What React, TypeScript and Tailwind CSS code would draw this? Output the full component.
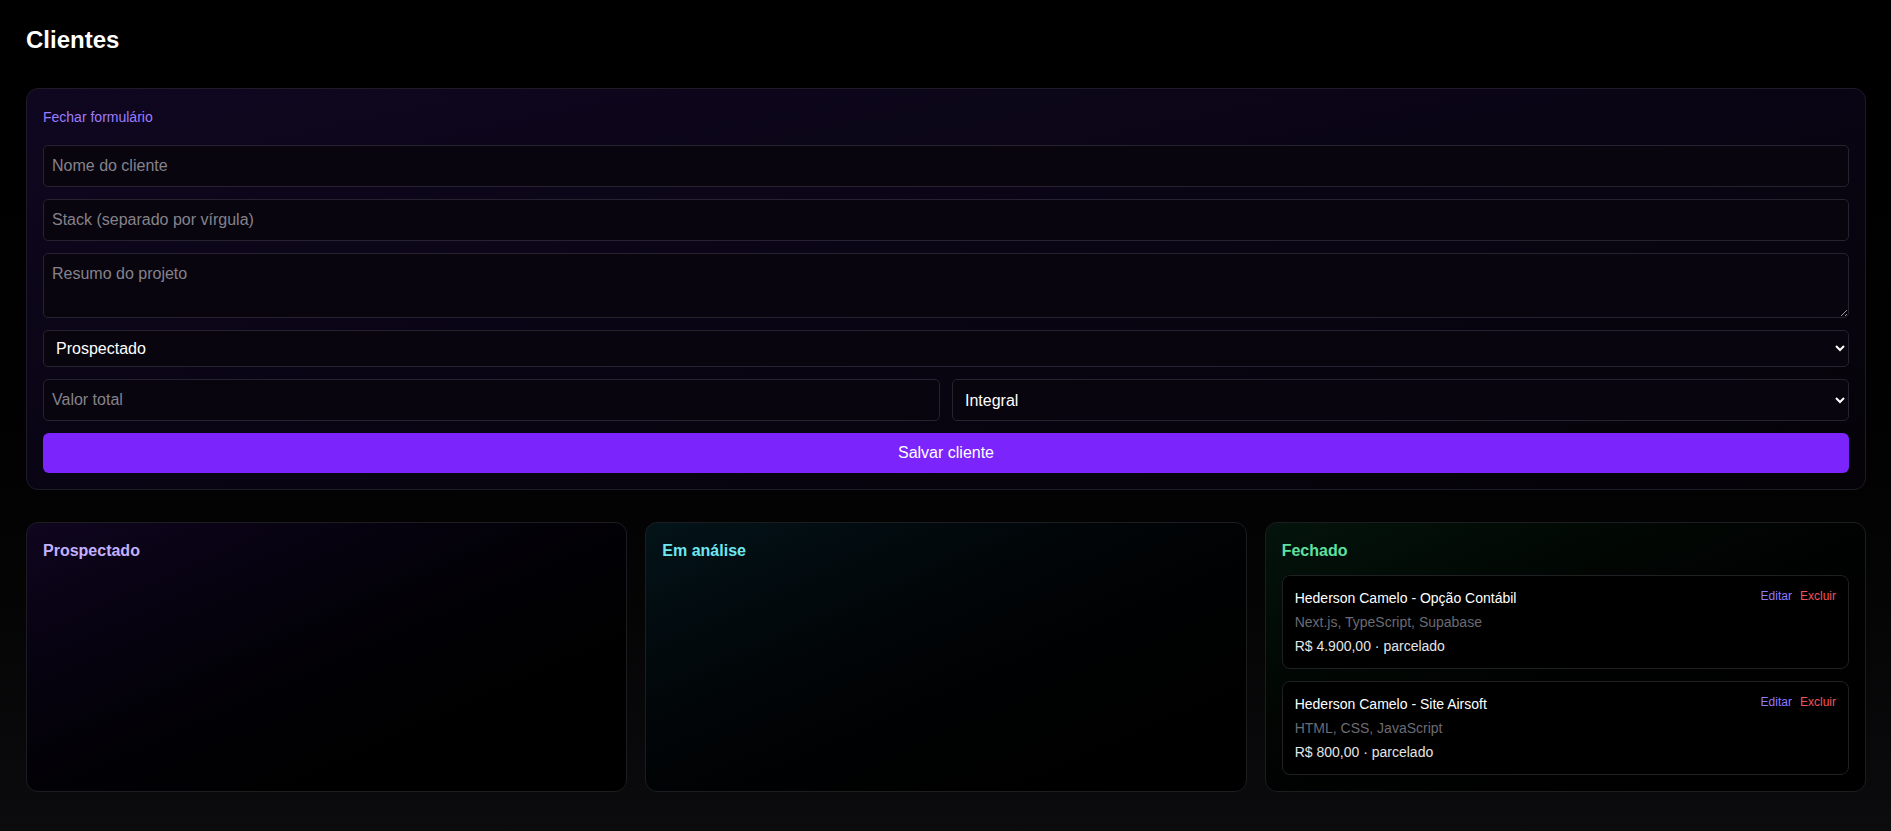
import { useState } from "react";

type Cliente = {
  id: number;
  nome: string;
  stack: string;
  valor: string;
  pagamento: string;
};

const fechados: Cliente[] = [
  { id: 1, nome: "Hederson Camelo - Opção Contábil", stack: "Next.js, TypeScript, Supabase", valor: "R$ 4.900,00", pagamento: "parcelado" },
  { id: 2, nome: "Hederson Camelo - Site Airsoft", stack: "HTML, CSS, JavaScript", valor: "R$ 800,00", pagamento: "parcelado" },
];

const field =
  "w-full rounded-[5px] border border-[#26222f] bg-[#08050e] px-2 text-base text-white placeholder:text-[#85828c] outline-none";

function ClienteCard({ c }: { c: Cliente }) {
  return (
    <div className="rounded-lg border border-[#1f1f24] bg-black p-3">
      <div className="flex items-start justify-between">
        <div className="text-sm text-white">{c.nome}</div>
        <div className="flex gap-2 text-xs">
          <button className="text-[#8f7bff]">Editar</button>
          <button className="text-[#f0545a]">Excluir</button>
        </div>
      </div>
      <div className="mt-1 text-sm text-[#6b6b73]">{c.stack}</div>
      <div className="mt-1 text-sm text-[#e5e5e5]">
        {c.valor} · {c.pagamento}
      </div>
    </div>
  );
}

function Coluna({ title, color, tint, items }: { title: string; color: string; tint: string; items: Cliente[] }) {
  return (
    <div className={`rounded-xl border border-[#1c1c21] bg-gradient-to-br ${tint} to-black p-4`}>
      <h2 className={`text-base font-bold ${color}`}>{title}</h2>
      <div className="mt-3 space-y-3">
        {items.map((c) => (
          <ClienteCard key={c.id} c={c} />
        ))}
      </div>
    </div>
  );
}

export default function App() {
  const [open] = useState(true);

  return (
    <div
      className="min-h-screen bg-gradient-to-b from-black to-[#0c0c0e] pl-[26px] pr-[25px] pt-6 pb-10 text-white"
      style={{ fontFamily: '"Liberation Sans", Arial, sans-serif' }}
    >
      <h1 className="text-2xl font-bold">Clientes</h1>

      {open ? (
        <div className="mt-8 rounded-xl border border-[#1e1a28] bg-gradient-to-br from-[#0f0720] to-[#050308] p-4">
          <button className="block h-6 text-sm text-[#9d7bff]">Fechar formulário</button>
          <div className="mt-4 space-y-3">
            <input className={`${field} h-[42px]`} placeholder="Nome do cliente" />
            <input className={`${field} h-[42px]`} placeholder="Stack (separado por vírgula)" />
            <textarea className={`${field} block h-[65px] py-2`} placeholder="Resumo do projeto" />
            <select className={`${field} h-[37px] [color-scheme:dark]`} defaultValue="Prospectado">
              <option>Prospectado</option>
              <option>Em análise</option>
              <option>Fechado</option>
            </select>
            <div className="grid grid-cols-2 gap-3">
              <input className={`${field} h-[42px]`} placeholder="Valor total" />
              <select className={`${field} h-[42px] [color-scheme:dark]`} defaultValue="Integral">
                <option>Integral</option>
                <option>Parcelado</option>
              </select>
            </div>
            <button className="h-10 w-full rounded-md bg-[#7c24fc] text-base text-white">Salvar cliente</button>
          </div>
        </div>
      ) : null}

      <div className="mt-8 grid grid-cols-3 gap-[18px]">
        <Coluna title="Prospectado" color="text-[#c4b0ff]" tint="from-[#10061f]" items={[]} />
        <Coluna title="Em análise" color="text-[#6ee7f0]" tint="from-[#041419]" items={[]} />
        <Coluna title="Fechado" color="text-[#5fe0a0]" tint="from-[#04140c]" items={fechados} />
      </div>
    </div>
  );
}
